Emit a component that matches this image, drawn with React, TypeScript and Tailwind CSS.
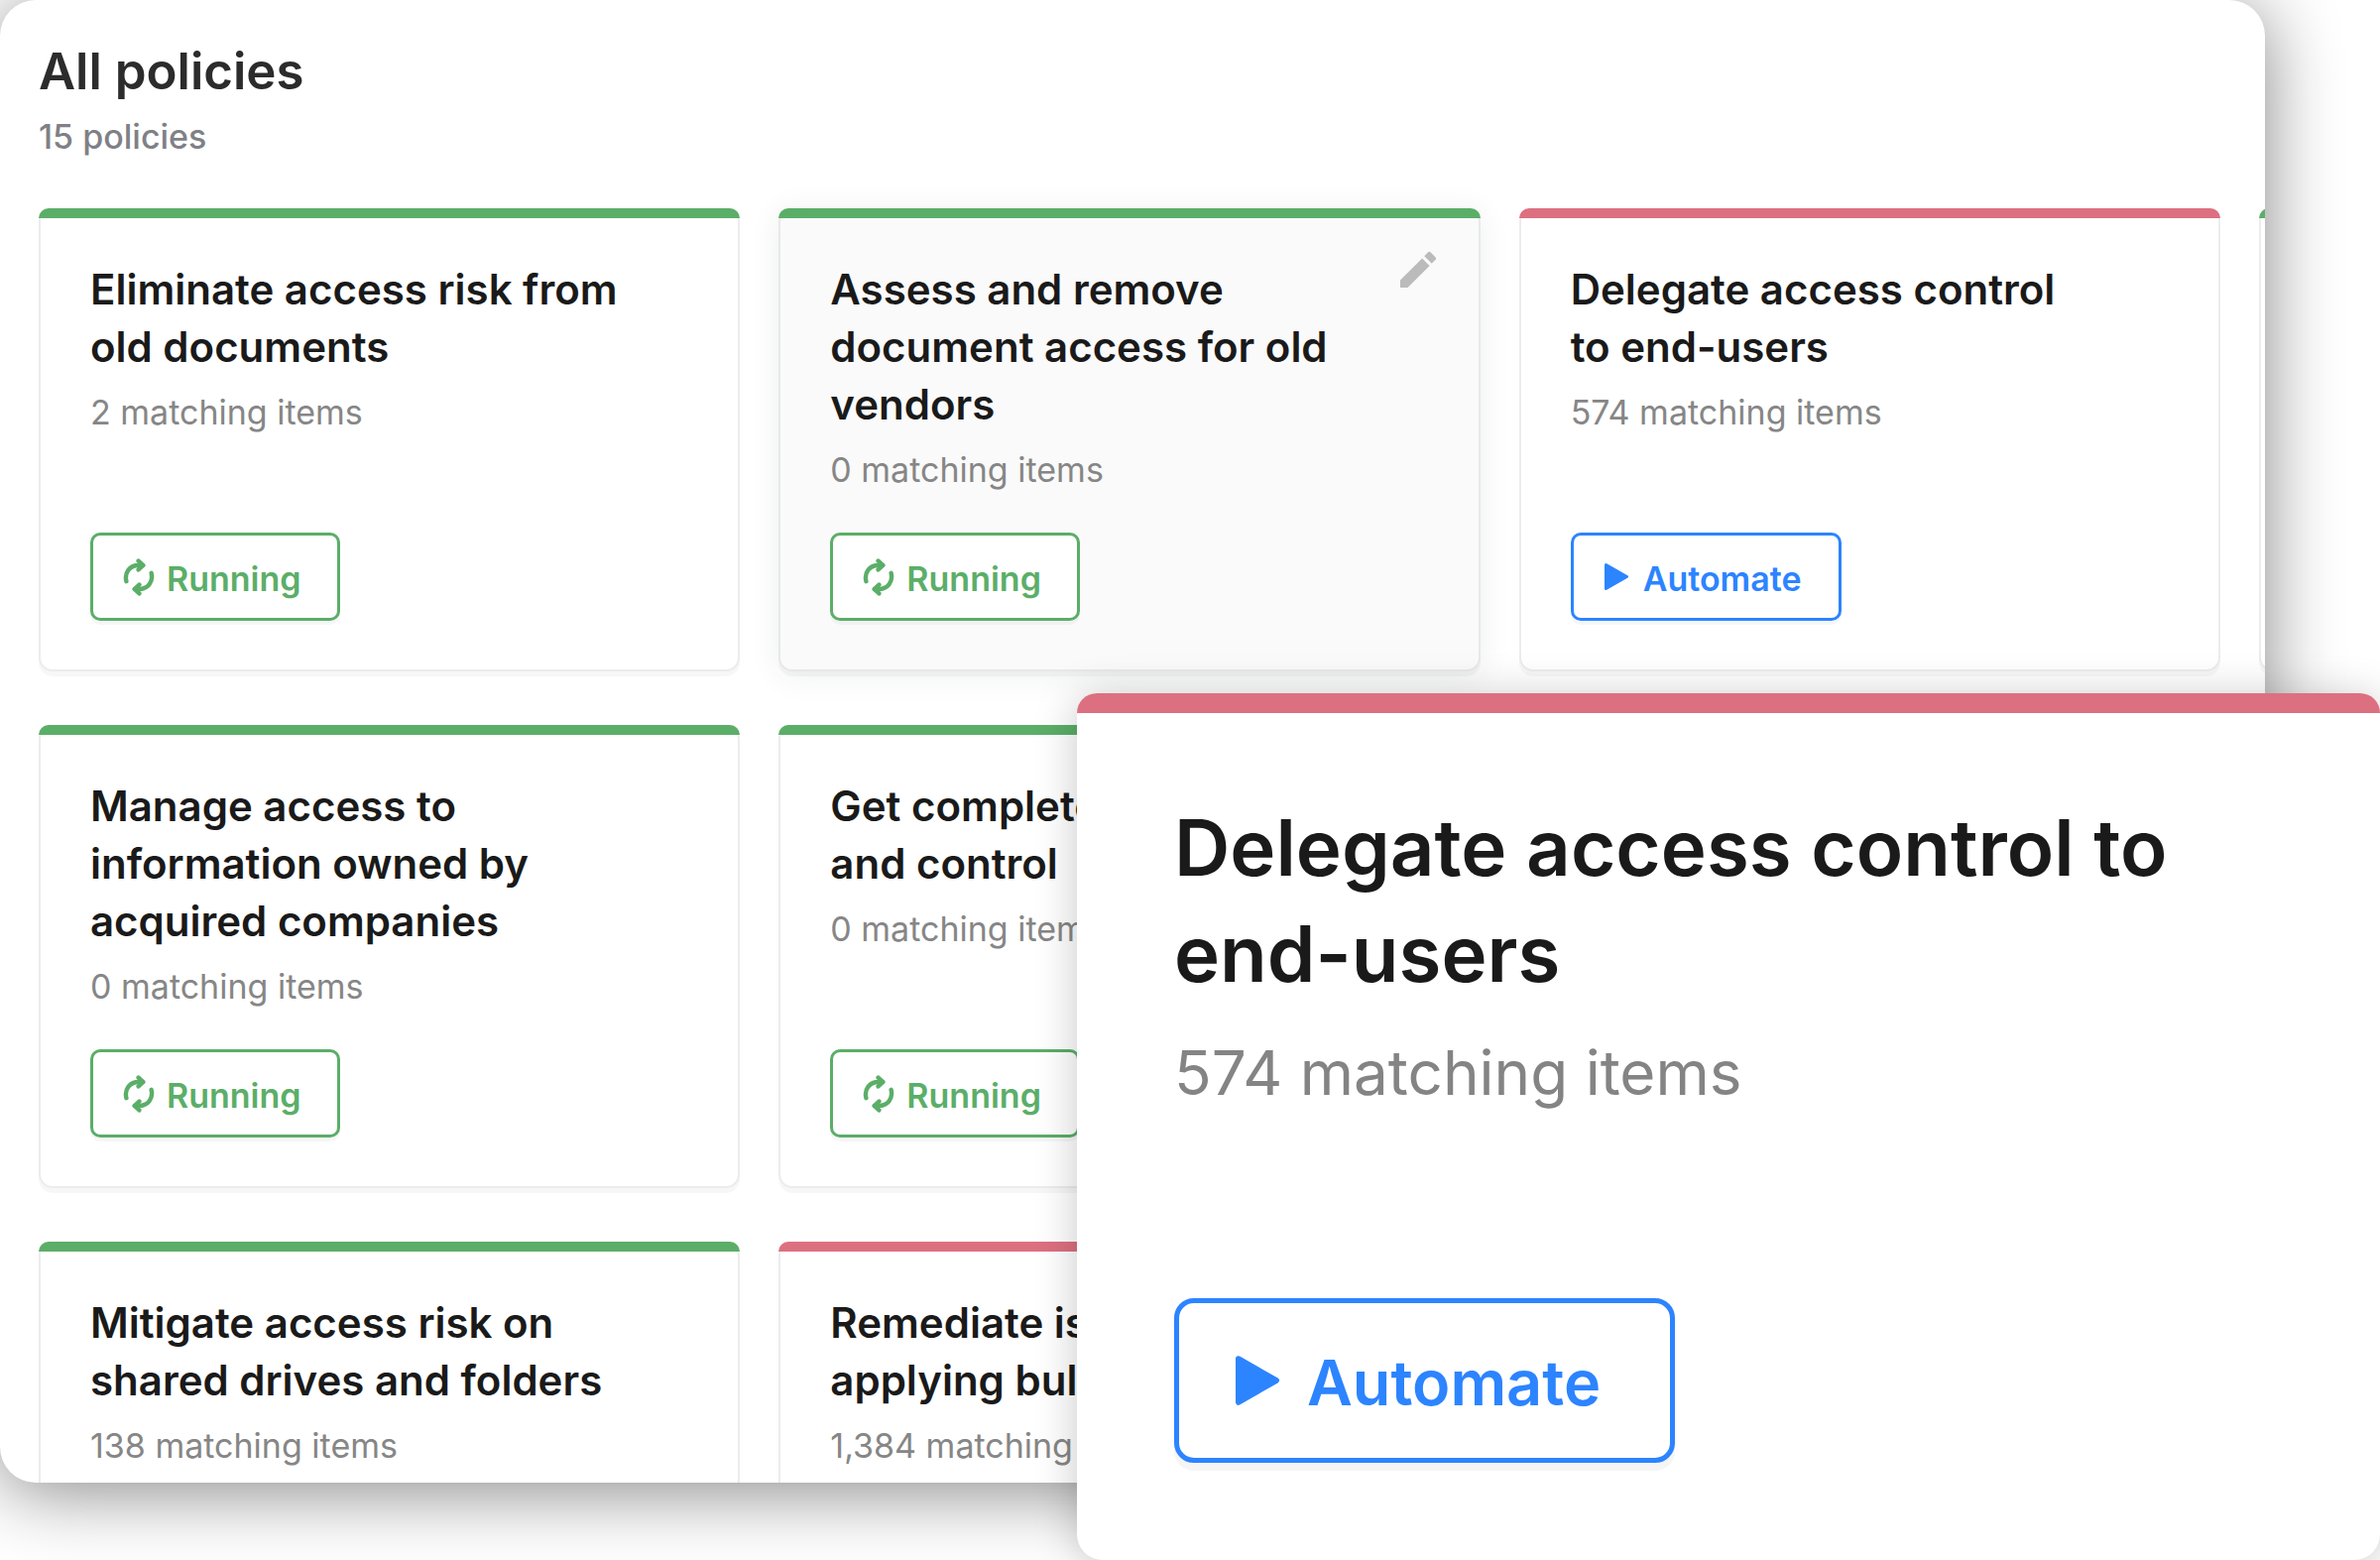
import React from "react";
import { MdEdit } from "react-icons/md";

type Status = "running" | "automate";

interface Policy {
  title: string;
  items: string;
  status: Status;
  active?: boolean;
}

const rows: Policy[][] = [
  [
    { title: "Eliminate access risk from\nold documents", items: "2 matching items", status: "running" },
    {
      title: "Assess and remove\ndocument access for old\nvendors",
      items: "0 matching items",
      status: "running",
      active: true,
    },
    { title: "Delegate access control\nto end-users", items: "574 matching items", status: "automate" },
    { title: "", items: "", status: "running" },
  ],
  [
    {
      title: "Manage access to\ninformation owned by\nacquired companies",
      items: "0 matching items",
      status: "running",
    },
    { title: "Get complete visibility\nand control", items: "0 matching items", status: "running" },
  ],
  [
    { title: "Mitigate access risk on\nshared drives and folders", items: "138 matching items", status: "running" },
    { title: "Remediate issues by\napplying bulk actions", items: "1,384 matching items", status: "automate" },
  ],
];

function CycleIcon() {
  return (
    <svg
      viewBox="0 0 32 38"
      className="h-[38px] w-8 shrink-0"
      fill="none"
      stroke="currentColor"
      strokeWidth="4.4"
      strokeLinecap="round"
      strokeLinejoin="round"
      aria-hidden="true"
    >
      <path d="M3.4 23.2C1.2 14 7 7 16 7H20" />
      <path d="M15.6 2.6L20.4 7L15.6 11.4" />
      <path d="M28.6 14.8C30.8 24 25 31 16 31H12" />
      <path d="M16.4 26.6L11.6 31L16.4 35.4" />
      <path d="M16 4.5L19.5 7L16 9.5ZM16 28.5L12.5 31L16 33.5Z" fill="currentColor" strokeWidth="2" />
    </svg>
  );
}

function PlayIcon({ className }: { className: string }) {
  return (
    <svg viewBox="0 0 24 27" className={className} fill="currentColor" aria-hidden="true">
      <path
        d="M1.5 1.5L22.5 13.5L1.5 25.5Z"
        stroke="currentColor"
        strokeWidth="3"
        strokeLinejoin="round"
      />
    </svg>
  );
}

function StatusButton({ status }: { status: Status }) {
  if (status === "running") {
    return (
      <button
        type="button"
        className="flex h-[89px] items-center self-start rounded-[10px] border-3 border-[#5bae68] bg-white pl-[30px] pr-[36px] text-[34px] font-semibold leading-[50px] text-[#5bae68] shadow-[0_4px_0_rgba(0,0,0,0.03)]"
      >
        <CycleIcon />
        <span className="ml-3 pt-1">Running</span>
      </button>
    );
  }
  return (
    <button
      type="button"
      className="flex h-[89px] items-center self-start rounded-[10px] border-3 border-[#2c84ff] bg-white pl-[31px] pr-[37px] text-[34px] font-semibold leading-[50px] text-[#2c84ff] shadow-[0_4px_0_rgba(0,0,0,0.03)]"
    >
      <PlayIcon className="h-[27px] w-6 shrink-0" />
      <span className="ml-[15px] pt-1">Automate</span>
    </button>
  );
}

function PolicyCard({ policy }: { policy: Policy }) {
  const { title, items, status, active } = policy;
  return (
    <article
      className={
        active
          ? "relative flex h-[467px] flex-col rounded-[14px] border-x-2 border-b-2 border-[#e8e8e8] bg-[#fafafa] shadow-[0_5px_0_rgba(0,0,0,0.03),0_4px_32px_rgba(20,50,40,0.08)]"
          : "relative flex h-[467px] flex-col rounded-[14px] border-x-2 border-b-2 border-[#ececec] bg-white shadow-[0_5px_0_rgba(0,0,0,0.03)]"
      }
    >
      <div
        className={
          status === "running"
            ? "-mx-[2px] h-[10px] shrink-0 rounded-t-[10px] bg-[#5bae68]"
            : "-mx-[2px] h-[10px] shrink-0 rounded-t-[10px] bg-[#dd7080]"
        }
      />
      {title && (
        <div className="flex flex-1 flex-col px-[50px] pb-[49px] pt-[43px]">
          <h2 className="whitespace-pre text-[42px] font-semibold leading-[58px] text-[#1a1a1a]">{title}</h2>
          <p className="mt-2 whitespace-nowrap text-[34px] leading-[58px] text-[#868686]">{items}</p>
          <div className="mt-auto flex">
            <StatusButton status={status} />
          </div>
        </div>
      )}
      {active && (
        <button type="button" aria-label="Edit policy" className="absolute right-[37px] top-[38px] text-[#bbbbbb]">
          <MdEdit className="size-12" />
        </button>
      )}
    </article>
  );
}

export default function App() {
  return (
    <div className="relative h-screen overflow-hidden bg-white pb-[78px] pr-[116px] font-['Inter',sans-serif]">
      <main className="h-full overflow-hidden rounded-[36px] bg-white pl-[39px] pr-[45px] pt-10 shadow-[0_8px_76px_rgba(0,0,0,0.48)]">
        <h1 className="text-[51px] font-semibold leading-[64px] text-[#2c2c2c]">All policies</h1>
        <p className="mt-[9px] text-[34px] font-medium leading-[50px] text-[#808086]">15 policies</p>
        <div className="mt-[47px] flex flex-col gap-[54px]">
          {rows.map((row, i) => (
            <div key={i} className="grid grid-cols-[repeat(4,calc((100%-78px)/3))] gap-[39px]">
              {row.map((policy, j) => (
                <PolicyCard key={j} policy={policy} />
              ))}
            </div>
          ))}
        </div>
      </main>

      <article className="absolute bottom-0 right-0 w-[1314px] overflow-hidden rounded-t-[20px] rounded-b-[26px] bg-white shadow-[0_4px_44px_rgba(0,0,0,0.22)]">
        <div className="h-5 bg-[#dd7080]" />
        <div className="px-[98px] pb-[98px] pt-[82px]">
          <h2 className="whitespace-pre text-[78px] font-semibold leading-[107px] text-[#1a1a1a]">
            {"Delegate access control to\nend-users"}
          </h2>
          <p className="mt-[22px] text-[62px] leading-[90px] text-[#848484]">574 matching items</p>
          <button
            type="button"
            className="mt-[182px] flex h-[166px] items-center rounded-[20px] border-5 border-[#2c84ff] bg-white pl-[57px] pr-[70px] text-[63px] font-semibold leading-[90px] text-[#2c84ff] shadow-[0_8px_0_rgba(0,0,0,0.04)]"
          >
            <PlayIcon className="h-[50px] w-11 shrink-0" />
            <span className="ml-[28px] pt-1">Automate</span>
          </button>
        </div>
      </article>
    </div>
  );
}
